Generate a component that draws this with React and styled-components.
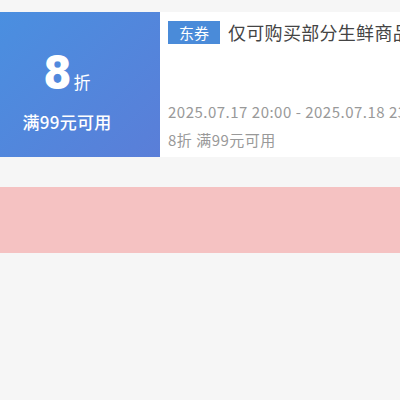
import React from 'react'
import styled, { createGlobalStyle } from 'styled-components'

const GlobalStyle = createGlobalStyle`
  body {
    margin: 0;
    background: #f6f6f6;
    font-family: "Noto Sans CJK SC", "Noto Sans", sans-serif;
  }
`

const Page = styled.div`
  padding-top: 12px;
  display: flex;
  flex-direction: column;
  gap: 30px;
  overflow: hidden;
  width: 400px;
`

const Card = styled.div`
  display: flex;
  height: 145px;
  background: #fff;
`

const Left = styled.div`
  flex: 0 0 160px;
  background: linear-gradient(135deg, #4a8fe0 0%, #5a7ed8 100%);
  color: #fff;
  display: flex;
  flex-direction: column;
  align-items: center;
  justify-content: center;
  padding: 14px 26px 0 0;
  box-sizing: border-box;
`

const Amount = styled.div`
  display: flex;
  align-items: baseline;
  line-height: 1;
`

const Num = styled.span`
  font-family: "Roboto", "Noto Sans", sans-serif;
  font-weight: 900;
  font-size: 48px;
`

const Unit = styled.span`
  font-size: 17px;
  margin-left: 2px;
`

const Cond = styled.div`
  margin-top: 12px;
  font-size: 17px;
  font-weight: 500;
  letter-spacing: 0.3px;
`

const Right = styled.div`
  flex: 1;
  min-width: 0;
  display: flex;
  flex-direction: column;
  padding: 7px 0 0 8px;
  white-space: nowrap;
  overflow: hidden;
`

const Head = styled.div`
  display: flex;
  align-items: center;
  gap: 8px;
`

const Tag = styled.span`
  background: #4a8bd9;
  color: #fff;
  font-size: 15px;
  line-height: 23px;
  padding: 0 11px;
`

const Title = styled.span`
  font-size: 18px;
  color: #444;
  letter-spacing: 0.3px;
`

const Meta = styled.div`
  font-size: 15px;
  color: #999;
  line-height: 28px;
  letter-spacing: 0.5px;
`

const Dates = styled(Meta)`
  margin-top: 53px;
`

const Banner = styled.div`
  height: 66px;
  background: #f5c2c2;
`

export default function App() {
  return (
    <>
      <GlobalStyle />
      <Page>
        <Card>
          <Left>
            <Amount>
              <Num>8</Num>
              <Unit>折</Unit>
            </Amount>
            <Cond>满99元可用</Cond>
          </Left>
          <Right>
            <Head>
              <Tag>东券</Tag>
              <Title>仅可购买部分生鲜商品</Title>
            </Head>
            <Dates>2025.07.17 20:00 - 2025.07.18 23:59</Dates>
            <Meta>8折 满99元可用</Meta>
          </Right>
        </Card>
        <Banner />
      </Page>
    </>
  )
}
